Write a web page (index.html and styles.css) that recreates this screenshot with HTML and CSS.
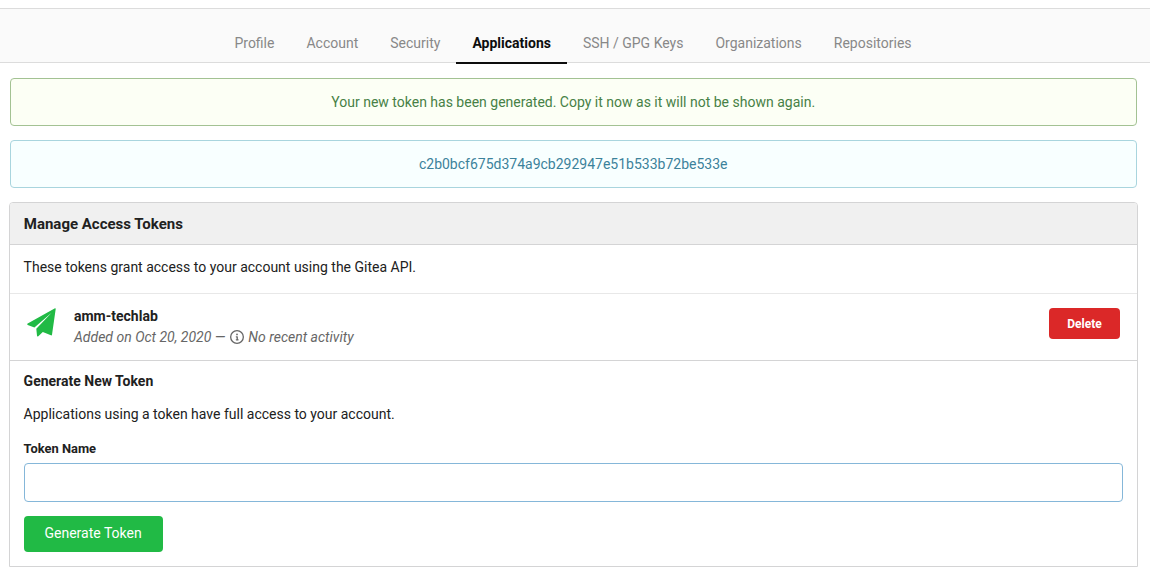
FILE: index.html
```html
<!DOCTYPE html>
<html lang="en">
<head>
<meta charset="utf-8">
<title>Applications</title>
<link rel="stylesheet" href="styles.css">
</head>
<body>
<nav class="tabs">
  <a class="tab">Profile</a>
  <a class="tab">Account</a>
  <a class="tab">Security</a>
  <a class="tab active">Applications</a>
  <a class="tab">SSH / GPG Keys</a>
  <a class="tab">Organizations</a>
  <a class="tab">Repositories</a>
</nav>
<main class="container">
  <div class="message positive">Your new token has been generated. Copy it now as it will not be shown again.</div>
  <div class="message info">c2b0bcf675d374a9cb292947e51b533b72be533e</div>
  <section class="panel">
    <h4 class="panel-header">Manage Access Tokens</h4>
    <p class="intro">These tokens grant access to your account using the Gitea API.</p>
    <div class="token">
      <svg class="plane" viewBox="0 0 29 29"><path d="M28 .2Q28.8 .1 28.7 1L25 26.7Q24.8 27.6 23.9 27.3L15.8 24.1 11.3 28.2Q10.3 28.8 10 27.8L9.3 20.8 24.6 4.8 7.4 19.6.7 16.9Q-.3 16.2.7 15.5Z"/></svg>
      <div class="details">
        <strong>amm-techlab</strong>
        <div class="activity"><i>Added on Oct 20, 2020 — <svg class="info-icon" viewBox="0 0 16 16"><path fill-rule="evenodd" d="M8 1.5a6.5 6.5 0 100 13 6.5 6.5 0 000-13zM0 8a8 8 0 1116 0A8 8 0 010 8zm6.5-.25A.75.75 0 017.25 7h1a.75.75 0 01.75.75v2.75h.25a.75.75 0 010 1.5h-2a.75.75 0 010-1.5h.25v-2h-.25a.75.75 0 01-.75-.75zM8 6a1 1 0 100-2 1 1 0 000 2z"/></svg> No recent activity</i></div>
      </div>
      <button class="delete">Delete</button>
    </div>
    <form class="generate">
      <h5>Generate New Token</h5>
      <p>Applications using a token have full access to your account.</p>
      <label for="name">Token Name</label>
      <input id="name" type="text">
      <button class="submit" type="button">Generate Token</button>
    </form>
  </section>
</main>
</body>
</html>
```
FILE: styles.css
```css
* { box-sizing: border-box; }
body {
  margin: 0;
  padding-top: 8px;
  background: #fff;
  color: #212121;
  font: 14px/20px Roboto, sans-serif;
}
h4, h5, p { margin: 0; }
button, input { font-family: inherit; }

.tabs {
  display: flex;
  justify-content: center;
  height: 55px;
  padding: 15px 4px 0 0;
  background: #fafafa;
  border-top: 1px solid #dcdcdc;
  border-bottom: 1px solid #dcdcdc;
}
.tab {
  height: 40px;
  padding: 9px 16px 0;
  color: #888;
  border-bottom: 2px solid transparent;
}
.tab.active {
  color: #0d0d0d;
  font-weight: 700;
  border-color: #0d0d0d;
}

.container { margin: 15px 13px 0 10px; }
.message {
  height: 48px;
  margin-bottom: 14px;
  padding: 13px 0.6px 0 0;
  border: 1px solid;
  border-radius: 4px;
  text-align: center;
}
.positive { background: #fcfff5; border-color: #a3c293; color: #478146; }
.info { background: #f8ffff; border-color: #a9d5de; color: #3c829b; }

.panel {
  margin: 0 -1px;
  border: 1px solid #d4d4d5;
  border-radius: 4px 4px 0 0;
  height: 365px;
}
.panel-header {
  height: 42px;
  padding: 11px 13.8px 0;
  background: #f0f0f0;
  border-bottom: 1px solid #d4d4d5;
  border-radius: 3px 3px 0 0;
  font-size: 15px;
}
.intro { height: 48px; padding: 12px 13.6px 0; }
.token {
  display: flex;
  align-items: flex-start;
  height: 68px;
  padding: 14px 17px 0;
  border-top: 1px solid #e8e8e8;
  border-bottom: 1px solid #d4d4d5;
}
.plane { width: 29px; height: 29px; fill: #21ba45; }
.details { flex: 1; padding-left: 18px; line-height: 18px; }
.details strong { display: block; height: 21px; line-height: 16px; }
.activity { color: #666; line-height: 16px; }
.info-icon { width: 14px; height: 14px; margin: 0 1px; vertical-align: -2px; fill: currentColor; }
.delete {
  width: 71px;
  height: 31px;
  padding: 0;
  border: 0;
  border-radius: 4px;
  background: #db2828;
  color: #fff;
  font-size: 12px;
  font-weight: 700;
}
.generate { padding: 10px 14px 0 13.6px; }
.generate h5 { font-size: 14px; }
.generate p { margin-top: 13px; }
.generate label {
  display: block;
  margin-top: 16px;
  font-size: 12.9px;
  line-height: 18px;
  font-weight: 700;
}
.generate input {
  display: block;
  width: 100%;
  height: 39px;
  margin-top: 5px;
  border: 1px solid #85b7d9;
  border-radius: 4px;
  outline: 0;
}
.submit {
  display: block;
  width: 139px;
  height: 36px;
  margin-top: 14px;
  padding: 0 0 2px 0;
  border: 0;
  border-radius: 4px;
  background: #21ba45;
  color: #fff;
  font-size: 14px;
}
```
